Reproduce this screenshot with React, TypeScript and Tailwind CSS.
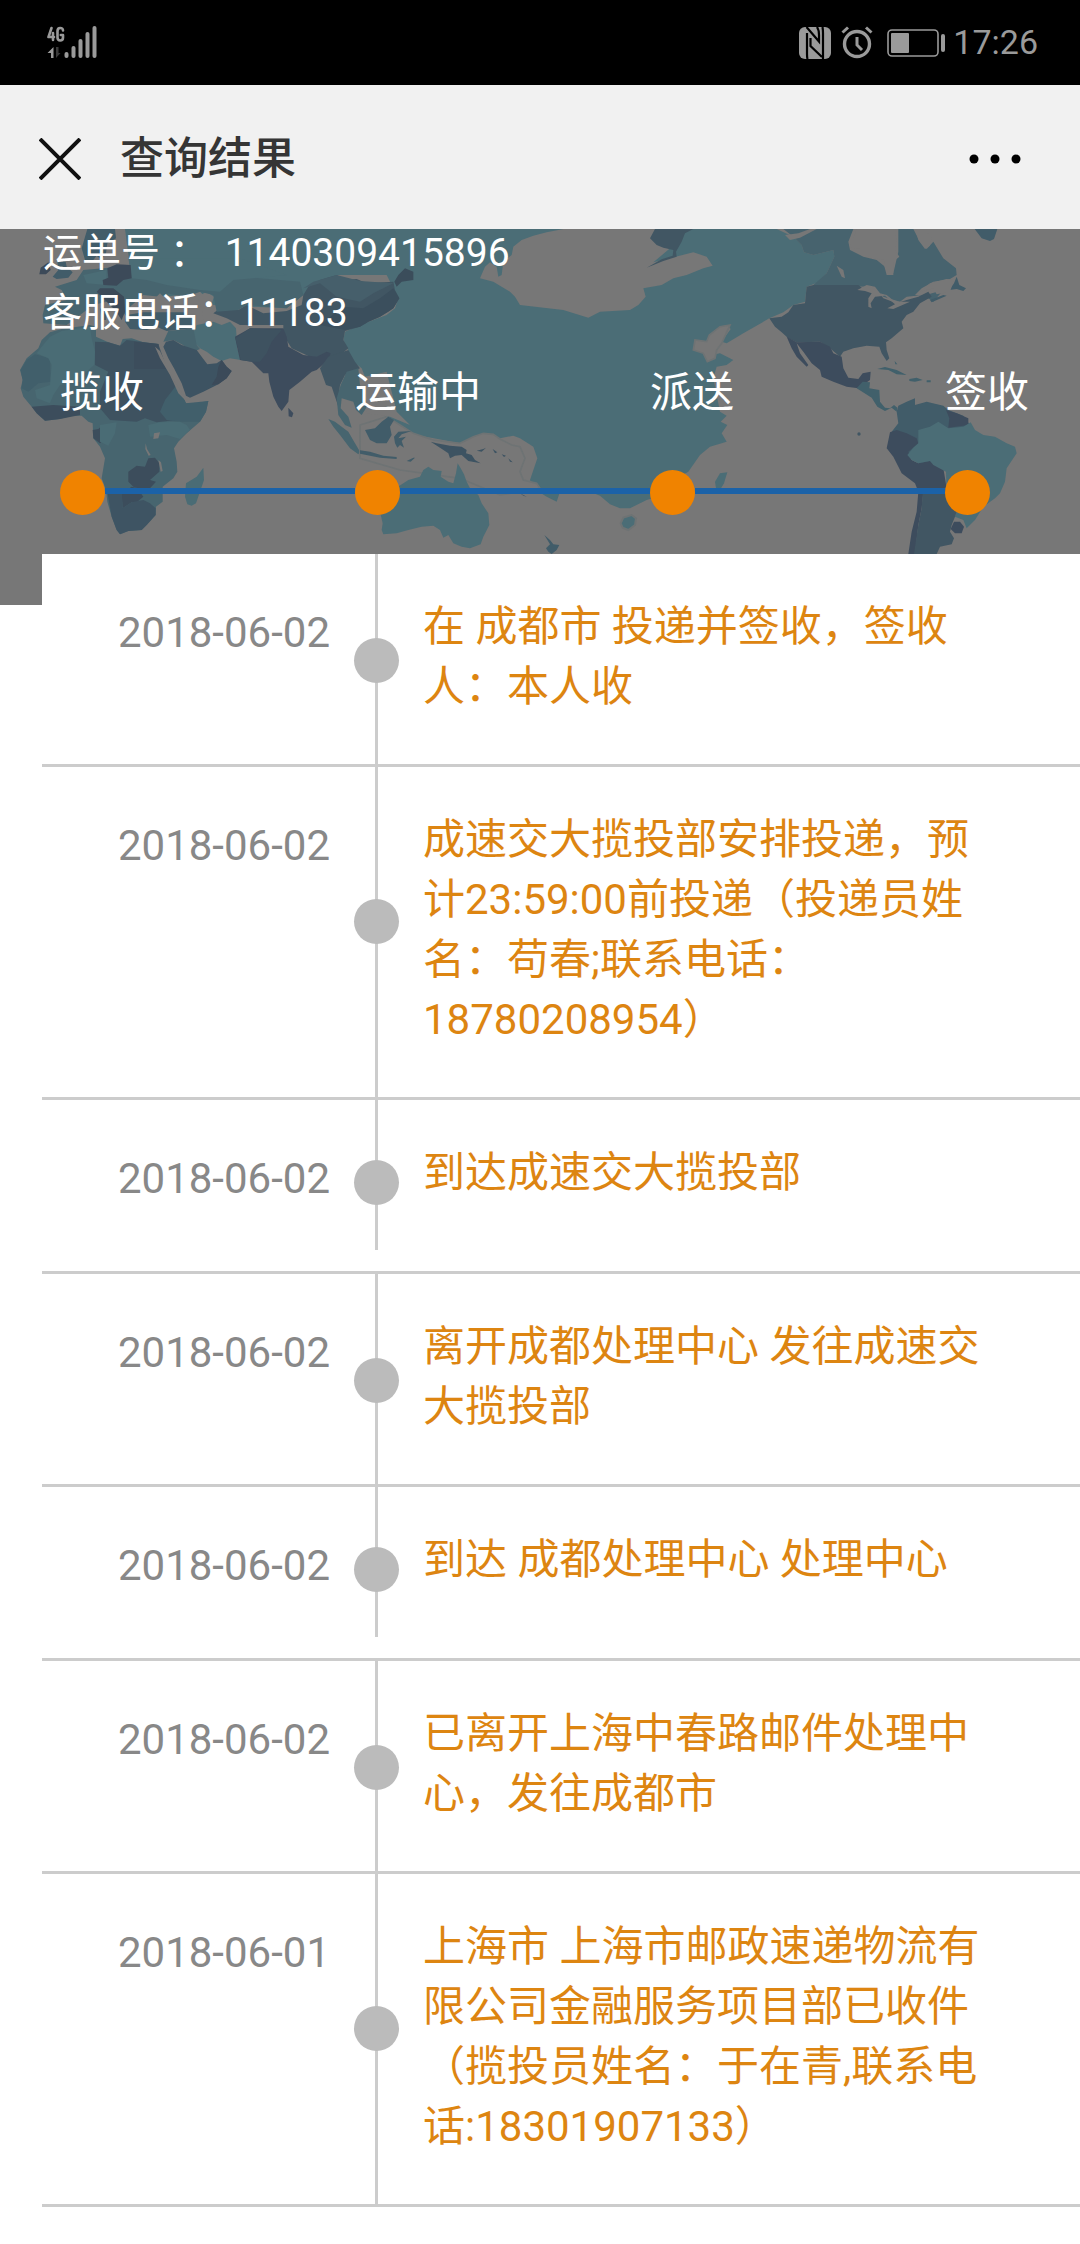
import React from "react";

const records = [
  { date: "2018-06-02", text: "在 成都市 投递并签收，签收人：本人收" },
  {
    date: "2018-06-02",
    text: "成速交大揽投部安排投递，预计23:59:00前投递（投递员姓名：苟春;联系电话：18780208954）",
  },
  { date: "2018-06-02", text: "到达成速交大揽投部" },
  { date: "2018-06-02", text: "离开成都处理中心 发往成速交大揽投部" },
  { date: "2018-06-02", text: "到达 成都处理中心 处理中心" },
  { date: "2018-06-02", text: "已离开上海中春路邮件处理中心，发往成都市" },
  {
    date: "2018-06-01",
    text: "上海市 上海市邮政速递物流有限公司金融服务项目部已收件（揽投员姓名：于在青,联系电话:18301907133）",
  },
];

function SignalIcon() {
  return (
    <svg width="52" height="34" viewBox="0 0 52 34" fill="#9a9a9a">
      <g fill="none" stroke="#9a9a9a" strokeWidth="2.6" strokeLinecap="round" strokeLinejoin="round">
        <path d="M4.5 2 L1.5 11 H7 M6 7 V14" />
        <path d="M16 4.5 Q16 2 13.2 2 Q10.5 2 10.5 5 V11.5 Q10.5 14.5 13.2 14.5 Q16 14.5 16 11.5 V9 H13.8" />
      </g>
      <path d="M6.5 21 V32 H4 V27 H0.5 Z" />
      <path d="M9 21 V32 L13.5 27 H11.5 V21 Z" fill="#3a3a3a" />
      <rect x="17.5" y="26" width="4" height="6" rx="2" />
      <rect x="24.5" y="20" width="4" height="12" rx="2" />
      <rect x="31.5" y="13" width="4" height="19" rx="2" />
      <rect x="38.5" y="6" width="4" height="26" rx="2" />
      <rect x="45.5" y="0" width="4" height="32" rx="2" />
    </svg>
  );
}

function NfcIcon() {
  return (
    <svg width="32" height="32" viewBox="0 0 32 32">
      <rect width="32" height="32" rx="6" fill="#9a9a9a" />
      <g fill="none" stroke="#000000" strokeWidth="2.2">
        <path d="M7.5 0 L20 14.5 V8 Q20 3 18 0" />
        <path d="M24 32 V29 L11.5 16 V24 Q11.5 29 13.5 32" stroke="none" />
        <path d="M8.5 32 Q8 30 8 27 V6" />
        <path d="M23.5 0 Q24 3 24 6 V32" />
        <path d="M11 9 V25 Q11 29 13 32" stroke="none" />
        <path d="M11.5 11 V19 L23 30" />
      </g>
    </svg>
  );
}

function AlarmIcon() {
  return (
    <svg width="32" height="34" viewBox="0 0 32 34" fill="none" stroke="#9a9a9a">
      <circle cx="16" cy="18" r="12.5" strokeWidth="3.4" />
      <path d="M16 11 V19 L21 24" strokeWidth="3" />
      <path d="M1.5 6.5 L7 1.5 M30.5 6.5 L25 1.5" strokeWidth="3" />
    </svg>
  );
}

function BatteryIcon() {
  return (
    <svg width="58" height="28" viewBox="0 0 58 28">
      <rect x="1" y="1" width="50" height="26" rx="4" fill="none" stroke="#9a9a9a" strokeWidth="1.6" />
      <rect x="4" y="4" width="18" height="20" rx="1" fill="#9a9a9a" />
      <rect x="54" y="5" width="4" height="18" rx="2" fill="#9a9a9a" />
    </svg>
  );
}

function WorldMap() {
  return (
    <svg
      className="absolute inset-0 h-full w-full"
      viewBox="0 12 3240 1128"
      preserveAspectRatio="xMidYMin slice"
      aria-hidden="true"
    >
      {/* europe and asia */}
      <path
        fill="#4b6d76"
        d="M375 12 H1690 L1640 22 L1600 32 L1565 45 L1540 65 L1535 90 L1510 110 L1505 150 L1495 155 L1490 125 L1470 112 L1455 125 L1440 160 L1480 170 L1530 200 L1545 215 L1560 240 L1690 255 L1765 278 L1800 260 L1890 255 L1915 240 L1937 215 L1930 190 L1985 180 L2020 160 L2060 150 L2110 130 L2138 122 L2120 95 L2080 82 L1960 112 L2010 70 L2035 12 H2330 L2380 35 L2405 60 L2412 82 L2440 90 L2500 75 L2503 95 L2480 145 L2455 172 L2420 185 L2415 230 L2380 240 L2350 262 L2308 280 L2230 325 L2180 355 L2165 350 L2192 312 L2180 300 L2160 305 L2110 365 L2120 400 L2090 400 L2160 385 L2200 405 L2180 420 L2150 425 L2140 460 L2160 560 L2180 572 L2162 590 L2182 600 L2165 625 L2180 650 L2130 665 L2100 690 L2065 740 L2010 770 L1990 810 L1940 825 L1890 850 L1860 850 L1830 838 L1800 812 L1770 800 L1700 795 L1680 800 L1670 830 L1640 815 L1600 790 L1590 765 L1612 700 L1600 665 L1560 640 L1540 632 L1500 640 L1465 665 L1420 665 L1380 655 L1250 630 L1200 610 L1170 590 L1130 545 L1085 430 L1060 410 L1030 345 L1035 320 L1080 300 L1160 270 L1185 250 L1195 220 L1160 150 L1010 150 L910 210 L860 250 L640 240 L600 200 L500 215 L400 200 Z"
      />
      <path
        fill="#777777"
        stroke="#6e7374"
        strokeWidth="5"
        d="M2190 300 L2160 305 L2128 330 L2120 350 L2085 345 L2080 375 L2110 385 L2122 410 L2145 400 L2150 375 L2165 355 Z"
      />
      <path
        fill="#777777"
        d="M315 50 L345 60 L355 12 H375 L372 60 L360 105 L335 120 L308 125 L305 90 Z M592 215 L620 200 L642 215 L632 245 L645 275 L650 310 L625 305 L610 285 L605 250 Z"
      />
      <path fill="#415663" d="M1965 12 H2080 L2055 25 L2045 50 L2028 80 L2030 95 L1990 108 L1940 128 L1985 103 L2018 92 L2020 75 L1990 68 L1970 60 L1950 40 Z" />
      <path fill="#777777" d="M2370 40 L2440 15 L2400 35 Z" />
      <path
        fill="#415663"
        d="M910 210 L925 185 L960 165 L1010 150 L1040 165 L1070 162 L1100 175 L1180 170 L1185 195 L1198 220 L1180 250 L1165 260 L1140 275 L1105 290 L1080 305 L1035 318 L1030 345 L1045 370 L1020 390 L990 398 L930 395 L875 370 L850 330 L850 300 L720 300 L680 280 L640 265 L660 250 L715 255 L740 240 L790 265 L860 258 L905 240 Z"
      />
      <path fill="#465f6b" d="M910 190 L960 175 L1010 215 L1080 230 L1120 205 L1180 175 L1080 168 L1010 150 L940 170 Z" />
      <path fill="#3b4d5b" d="M1183 170 L1195 150 L1215 130 L1240 140 L1240 165 L1205 170 L1190 185 Z" />
      <path fill="#3b4f5d" d="M1030 245 L1090 250 L1140 220 L1180 190 L1198 220 L1180 250 L1140 275 L1105 290 L1080 305 L1035 315 L960 300 Z" />
      <path fill="#4b6d76" d="M575 335 L590 300 L640 290 L665 300 L690 290 L708 310 L712 370 L722 405 L690 400 L665 408 L640 395 L620 380 L600 370 L585 355 Z" />
      <path
        fill="#3d4c5d"
        d="M705 335 L750 310 L850 310 L860 335 L865 365 L910 390 L950 395 L980 380 L992 385 L985 405 L950 435 L935 440 L900 470 L868 495 L865 530 L845 558 L835 545 L820 515 L808 470 L805 445 L790 445 L780 435 L755 410 L720 405 L712 370 Z M865 548 L880 565 L876 577 L866 574 Z"
      />
      <path fill="#3e5260" d="M706 340 L750 310 L845 315 L815 350 L800 385 L780 410 L755 410 L722 405 L714 370 Z" />
      <path fill="#415663" d="M960 430 L985 395 L1030 380 L1045 375 L1065 410 L1080 430 L1055 440 L1035 450 L1020 480 L1015 520 L1020 560 L1005 515 L995 485 L978 480 Z" />
      <path fill="#47656f" d="M1022 480 L1040 440 L1075 430 L1080 480 L1110 530 L1085 570 L1068 555 L1060 530 L1025 520 L1022 550 L1045 575 L1055 608 L1035 600 L1015 570 L1010 520 Z M985 582 L1005 590 L1045 620 L1065 655 L1080 680 L1075 688 L1050 670 L1020 630 L1000 605 Z" />
      <path fill="#777777" d="M1095 455 L1160 440 L1180 520 L1190 560 L1230 600 L1170 575 L1100 565 Z" />
      <path
        fill="#47656f"
        d="M395 120 L660 150 L900 170 L910 210 L860 250 L740 240 L715 255 L650 260 L640 210 L600 200 L560 215 L500 205 L480 215 L430 210 L385 250 L380 275 L340 225 L280 240 L240 270 L200 300 L130 295 L128 270 L135 240 L200 225 L185 195 L165 185 L230 165 L250 135 L310 130 Z"
      />
      <path fill="#4b6d76" d="M250 150 L320 135 L320 180 L260 175 Z M385 100 H720 L860 150 L700 165 L660 200 L600 195 L500 180 L440 165 L395 160 Z" />
      <path fill="#777777" d="M430 235 L445 215 L460 225 L480 205 L500 225 L530 240 L548 262 L490 262 L430 262 Z" />
      <path fill="#415c69" d="M380 270 L430 262 L550 262 L580 280 L575 310 L500 318 L470 305 L440 315 L390 312 L375 290 Z" />
      <path
        fill="#3c4a59"
        d="M322 130 L350 118 L392 120 L395 160 L370 165 L350 182 L310 180 L308 165 L325 158 Z M118 148 L122 128 L145 112 L152 135 L138 148 Z M290 200 L300 190 L340 190 L372 215 L375 260 L365 285 L345 255 L320 230 Z"
      />
      <path fill="#415c69" d="M262 12 H345 L348 40 L322 55 L318 85 L305 105 L290 92 L280 105 L255 105 L245 70 Z M158 155 L175 135 L172 110 L195 100 L200 125 L218 142 L205 158 L170 162 Z M300 250 L320 260 L318 285 L305 285 Z" />
      {/* arabia */}
      <path fill="#47656f" d="M490 350 L505 318 L580 310 L590 360 L600 372 L580 380 L545 358 L520 345 Z" />
      <path fill="#3d5362" d="M490 365 L498 350 L520 345 L545 360 L590 375 L605 395 L622 418 L650 415 L665 405 L680 425 L695 438 L680 460 L655 478 L610 500 L570 518 L558 512 L545 475 L522 430 L505 400 Z" />
      <path fill="#3b4a59" d="M655 425 L665 405 L680 425 L695 438 L680 460 L655 478 L635 480 L650 455 Z" />
      {/* africa */}
      <path
        fill="#47656f"
        d="M150 322 L185 312 L270 300 L288 305 L288 335 L325 352 L360 362 L368 342 L395 340 L430 352 L475 357 L478 385 L500 425 L520 475 L548 512 L558 535 L590 535 L625 528 L618 560 L600 590 L560 625 L535 650 L522 670 L530 710 L532 740 L520 760 L488 785 L488 830 L468 845 L467 870 L440 900 L425 915 L385 918 L360 928 L350 915 L335 875 L322 830 L318 795 L305 760 L315 700 L300 665 L280 640 L278 595 L265 590 L245 572 L215 572 L180 582 L135 587 L110 565 L95 545 L70 515 L62 490 L68 465 L60 435 L80 400 L115 370 L125 345 Z"
      />
      <path fill="#415f6b" d="M105 388 L150 400 L152 470 L115 475 L85 500 L65 490 L68 465 L62 435 L80 405 Z" />
      <path fill="#4a6c75" d="M150 335 L185 318 L270 305 L275 340 L285 380 L282 420 L255 445 L240 470 L180 480 L160 510 L150 535 L110 520 L105 495 L150 480 L155 420 L145 400 L110 385 L125 365 Z" />
      <path fill="#3e5260" d="M285 350 L325 352 L360 362 L380 345 L475 357 L500 430 L548 512 L525 530 L545 565 L530 585 L470 592 L435 580 L410 590 L330 585 L300 550 L300 500 L325 440 L285 420 Z" />
      <path fill="#3c4d5c" d="M402 350 L475 357 L478 385 L500 432 H402 Z M95 545 L160 540 L240 545 L240 570 L180 582 L135 587 L110 565 Z M278 615 L295 612 L305 603 L320 628 L312 645 L300 655 L280 640 Z M385 740 L410 722 L435 725 L445 700 L465 698 L478 715 L478 740 L450 765 L468 770 L450 790 L430 795 L400 785 L385 770 Z M365 805 L395 785 L412 790 L430 815 L410 832 L395 832 L368 850 Z" />
      <path fill="#415f6b" d="M530 480 L548 512 L558 535 L625 528 L618 560 L600 590 L540 590 L500 585 L480 560 L495 525 Z" />
      <path fill="#4a6c75" d="M300 600 L350 592 L345 625 L325 662 L300 650 Z M445 600 L480 592 L540 590 L560 600 L570 615 L540 642 L500 630 L450 635 Z M610 728 L612 765 L600 800 L588 835 L575 842 L562 838 L555 815 L558 775 L590 755 Z" />
      <path fill="#3e5463" d="M320 790 L365 790 L368 850 L395 832 L430 825 L450 835 L467 850 L467 870 L440 900 L425 915 L385 918 L360 928 L350 915 L335 875 Z" />
      <path fill="#777777" d="M462 625 L480 622 L475 640 L460 642 Z M437 655 L441 672 L452 690 L446 692 L436 672 Z M475 705 L483 712 L488 738 L482 740 Z M465 365 L480 378 L500 420 L525 470 L555 515 L555 525 L535 505 L510 450 L480 400 Z" />
      {/* south east asia and oceania */}
      <path
        fill="#777777"
        stroke="#6e7374"
        strokeWidth="5"
        d="M1160 575 L1200 600 L1240 625 L1300 645 L1380 655 L1420 635 L1450 625 L1480 628 L1500 642 L1535 660 L1560 665 L1575 700 L1560 740 L1570 765 L1610 775 L1620 790 L1500 810 L1380 760 L1200 735 L1080 700 L1080 600 Z"
      />
      <path
        fill="#415c69"
        d="M1095 615 L1125 610 L1145 590 L1165 575 L1182 585 L1170 605 L1175 630 L1160 655 L1130 655 L1110 645 Z M1182 635 L1195 620 L1235 618 L1205 628 L1195 640 L1218 635 L1205 648 L1212 668 L1200 660 L1192 668 L1185 655 Z M1080 676 L1110 680 L1150 692 L1190 696 L1190 702 L1140 698 L1080 686 Z M1220 708 L1240 698 L1245 698 L1232 710 Z"
      />
      <path
        fill="#3d5362"
        d="M1292 650 L1310 655 L1350 662 L1385 665 L1400 675 L1398 685 L1415 690 L1425 705 L1442 715 L1405 708 L1385 690 L1365 692 L1350 700 L1345 685 L1320 668 Z M1430 677 L1450 672 L1458 668 L1445 680 Z M1478 672 L1492 682 L1485 685 Z M1505 688 L1518 692 L1512 696 Z M1525 700 L1538 712 L1530 710 Z M1560 805 L1580 815 L1570 812 Z"
      />
      <path
        fill="#4b6d76"
        d="M1202 780 L1225 765 L1260 755 L1270 735 L1285 725 L1300 735 L1325 738 L1322 755 L1345 770 L1360 775 L1368 745 L1373 715 L1382 730 L1392 748 L1400 770 L1410 790 L1435 810 L1445 835 L1465 865 L1468 900 L1450 935 L1442 958 L1410 970 L1385 965 L1360 955 L1345 930 L1330 938 L1320 915 L1300 902 L1265 905 L1225 915 L1190 925 L1150 928 L1145 915 L1148 895 L1140 860 L1150 810 Z"
      />
      <path fill="#415c69" d="M1633 930 L1650 945 L1660 958 L1678 960 L1670 975 L1655 987 L1645 980 L1638 970 L1650 958 Z" />
      <path fill="#4b6d76" stroke="#6e7374" strokeWidth="6" d="M1862 895 L1870 878 L1895 870 L1908 880 L1905 900 L1885 915 L1868 908 Z" />
      <path fill="#4b6d76" d="M2145 770 L2160 745 L2182 742 L2172 775 L2160 795 L2148 790 Z" />
      {/* north america */}
      <path
        fill="#47636e"
        d="M2350 12 H2560 L2545 50 L2550 75 L2590 95 L2630 105 L2655 125 L2665 150 L2680 145 L2695 80 L2695 12 H2740 L2760 50 L2780 72 L2800 50 L2830 100 L2868 130 L2870 150 L2850 162 L2800 170 L2765 190 L2745 210 L2770 212 L2830 195 L2800 230 L2770 210 L2720 215 L2700 230 L2650 215 L2600 185 L2460 180 L2440 180 L2480 145 L2503 95 L2500 75 L2440 90 L2412 82 L2405 60 L2380 35 Z"
      />
      <path fill="#777777" d="M2355 30 L2395 25 L2430 12 H2450 L2400 38 L2370 45 Z M2548 50 L2562 35 L2570 12 H2685 L2690 50 L2685 75 L2698 95 L2680 110 L2680 150 L2660 150 L2652 120 L2655 105 L2610 98 L2580 72 L2555 68 Z M2510 122 L2530 135 L2535 160 L2525 155 Z M2745 12 H2770 L2795 35 L2790 62 L2775 72 L2755 45 Z" />
      <path
        fill="#415663"
        d="M2420 185 L2440 180 H2575 L2590 192 L2625 190 L2650 220 L2690 235 L2720 225 L2755 215 L2785 200 L2795 215 L2760 235 L2740 260 L2720 270 L2705 290 L2710 310 L2675 340 L2658 352 L2660 375 L2668 400 L2660 408 L2645 385 L2638 365 L2600 362 L2560 370 L2530 380 L2520 395 L2490 370 L2460 350 L2390 352 L2365 340 L2345 322 L2325 305 L2308 280 L2345 275 L2365 262 L2380 240 L2415 235 Z"
      />
      <path fill="#3d4c5d" d="M2360 335 L2390 352 L2460 350 L2490 365 L2500 385 L2525 395 L2530 430 L2545 458 L2575 462 L2588 445 L2612 440 L2610 465 L2575 490 L2540 485 L2500 470 L2465 455 L2460 435 L2435 415 L2410 380 L2390 355 L2400 385 L2425 420 L2420 425 L2390 395 L2375 370 Z" />
      <path fill="#777777" d="M2572 195 L2600 180 L2625 185 L2640 205 L2660 210 L2685 230 L2730 230 L2680 252 L2662 250 L2685 238 L2655 212 L2625 215 L2612 235 L2615 250 L2605 245 L2605 220 L2615 205 L2595 198 Z" />
      <path fill="#415c69" d="M2848 195 L2862 175 L2870 155 L2878 180 L2898 190 L2890 198 L2870 192 Z M2790 225 L2830 210 L2840 212 L2795 232 Z M2924 12 H2992 L2982 42 L2970 48 L2945 40 Z" />
      <path fill="#777777" d="M2760 200 L2790 175 L2840 162 L2862 165 L2850 200 L2810 208 L2800 190 Z" />
      <path
        fill="#41606b"
        d="M2570 490 L2588 470 L2610 472 L2608 490 L2638 495 L2640 530 L2655 548 L2670 550 L2682 540 L2692 548 L2690 560 L2675 548 L2655 558 L2632 545 L2615 518 Z M2632 432 L2655 426 L2690 435 L2720 450 L2690 448 L2665 435 Z M2728 462 L2750 458 L2768 465 L2745 470 L2728 468 Z M2780 466 h12 v6 h-12 Z M2684 408 l8 10 h-6 Z"
      />
      <circle cx="2577" cy="627" r="5" fill="#415663" />
      {/* south america */}
      <path
        fill="#415c69"
        d="M2690 560 L2695 542 L2720 530 L2745 520 L2745 540 L2780 530 L2830 542 L2845 555 L2890 572 L2910 600 L2925 625 L2880 690 L2760 720 L2690 650 L2675 620 L2695 595 Z"
      />
      <path
        fill="#3d4c5d"
        d="M2670 622 L2690 615 L2720 625 L2750 640 L2755 655 L2725 680 L2735 705 L2755 715 L2790 708 L2830 730 L2840 790 L2770 800 L2765 850 L2755 900 L2745 987 L2725 987 L2735 920 L2750 860 L2755 800 L2745 775 L2705 745 L2680 695 L2660 670 Z M2838 555 L2870 565 L2905 580 L2905 600 L2845 608 L2848 580 Z"
      />
      <path
        fill="#4b6d76"
        d="M2722 690 L2740 668 L2755 655 L2755 615 L2790 605 L2815 590 L2830 600 L2845 610 L2890 605 L2912 592 L2925 615 L2950 630 L2985 635 L3020 655 L3045 665 L3050 685 L3020 730 L3015 770 L3000 805 L2985 820 L2950 845 L2925 885 L2900 910 L2890 885 L2865 875 L2880 830 L2840 800 L2838 740 L2800 720 L2790 708 L2755 715 L2735 705 Z"
      />
      <path fill="#415663" d="M2768 805 L2840 790 L2880 830 L2865 875 L2855 900 L2850 920 L2862 940 L2855 958 L2820 965 L2810 987 H2742 L2755 900 L2765 850 Z" />
      <path fill="#3d4c5d" d="M2862 890 L2880 890 L2892 905 L2885 925 L2865 925 L2852 912 Z" />
    </svg>
  );
}

function Step({ name, last }: { name: string; last?: boolean }) {
  return (
    <li className={last ? "w-[135px]" : "flex-1"}>
      <div className="text-[42px] leading-[60px]">{name}</div>
      <div className="mt-[47px] flex items-center">
        <span className="h-[45px] w-[45px] rounded-full bg-[#f08300]"></span>
        {!last && <span className="mb-1 h-[6px] flex-1 bg-[#1b62a8]"></span>}
      </div>
    </li>
  );
}

function App() {
  return (
    <div
      lang="zh-CN"
      className="min-h-screen bg-white font-['Roboto','Noto_Sans_CJK_SC',sans-serif]"
    >
      <div className="flex h-[85px] items-center justify-between bg-black pr-[42px] pl-[47px] text-[#9a9a9a]">
        <SignalIcon />
        <div className="flex items-center">
          <NfcIcon />
          <span className="ml-2.5">
            <AlarmIcon />
          </span>
          <span className="ml-3.5">
            <BatteryIcon />
          </span>
          <span className="ml-2 text-[34px]">17:26</span>
        </div>
      </div>

      <header className="flex h-36 items-center bg-[#f1f1f1] pt-1 pr-[59px] pl-[39px]">
        <button type="button" aria-label="关闭">
          <svg width="42" height="42" viewBox="0 0 42 42" stroke="#111111" strokeWidth="4">
            <path d="M1 1 L41 41 M41 1 L1 41" />
          </svg>
        </button>
        <h1 className="ml-[39px] flex-1 text-[44px] font-medium text-[#353535]">查询结果</h1>
        <button type="button" aria-label="更多">
          <svg width="52" height="12" viewBox="0 0 52 12">
            <circle cx="5" cy="6" r="4.5" />
            <circle cx="26" cy="6" r="4.5" />
            <circle cx="47" cy="6" r="4.5" />
          </svg>
        </button>
      </header>

      <section className="relative flow-root h-[376px] overflow-hidden bg-[#777777] text-white">
        <WorldMap />
        <div className="relative -mt-1.5">
          <div className="pl-[43px] text-[39px] leading-[60px]">
            <p>
              运单号 ：<span className="ml-4">1140309415896</span>
            </p>
            <p>客服电话：11183</p>
          </div>
          <ol className="mt-5 flex pl-[60px]">
            <Step name="揽收" />
            <Step name="运输中" />
            <Step name="派送" />
            <Step name="签收" last />
          </ol>
        </div>
      </section>

      <ul className="relative -mt-[51px] ml-[42px] bg-white text-[42px] leading-[60px]">
        {records.map((item, index) => (
          <li key={index} className="flex min-h-[174px] items-start border-b-[3px] border-[#cccccc]">
            <time className="w-[333px] shrink-0 pt-[49px] pr-[45px] text-right text-[#888888]">
              {item.date}
            </time>
            <div className="relative flex-1 border-l-[3px] border-[#cccccc] pt-[43px] pr-24 pb-[47px] pl-[45px] text-[#dd8511]">
              <span className="absolute top-[40%] -left-6 h-[45px] w-[45px] rounded-full bg-[#bbbbbb]"></span>
              {item.text}
            </div>
          </li>
        ))}
      </ul>
    </div>
  );
}

export default App;
